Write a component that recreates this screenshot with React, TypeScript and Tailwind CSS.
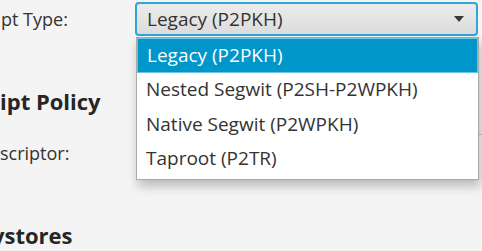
import { useState } from "react";

const scriptTypes = [
  "Legacy (P2PKH)",
  "Nested Segwit (P2SH-P2WPKH)",
  "Native Segwit (P2WPKH)",
  "Taproot (P2TR)",
];

export default function App() {
  const [selected] = useState(0);

  return (
    <main className="relative h-[251px] w-[482px] overflow-hidden bg-[#f4f4f4] font-['Open_Sans',sans-serif] text-[#333333]">
      {/* script type row */}
      <div className="mt-[2px] flex h-[34px] items-center">
        <div className="w-[135px] pl-[1px] text-[18px] leading-none">pt Type:</div>
        <div className="flex h-[34px] w-[343px] items-center rounded-[4px] border-2 border-[#2fa6d8] bg-gradient-to-b from-[#ececec] to-[#dcdcdc] pl-[10px] pr-[12px]">
          <span className="flex-1 text-[19px] leading-none">{scriptTypes[selected]}</span>
          <svg width="10" height="6" viewBox="0 0 10 6">
            <path d="M0 0 L10 0 L5 6 Z" fill="#3a3a3a" />
          </svg>
        </div>
      </div>

      {/* script policy section */}
      <h2 className="mt-[54px] text-[22px] font-bold leading-none text-[#262626]">ipt Policy</h2>

      <div className="mt-[22px] flex h-[50px]">
        <div className="w-[136px] pt-[10px] text-[18px] leading-none">scriptor:</div>
        <div className="h-[50px] flex-1 border-t border-[#c4c4c4] bg-[#f7f7f7]" />
      </div>

      {/* keystores section */}
      <h2 className="ml-[-8px] mt-[40px] text-[22px] font-bold leading-none text-[#262626]">ystores</h2>

      {/* dropdown popup */}
      <ul className="absolute left-[136px] top-[37px] w-[343px] border border-[#a9a9a9] bg-white pb-[3px] shadow-[2px_6px_10px_rgba(0,0,0,0.25)]">
        {scriptTypes.map((t, i) => (
          <li
            key={t}
            className={`flex h-[34.5px] items-center pl-[9px] text-[19px] leading-none ${
              i === selected
                ? "border border-[#6cc3e6] bg-[#0096c9] pl-[8px] text-white"
                : "text-[#333333]"
            }`}
          >
            {t}
          </li>
        ))}
      </ul>
    </main>
  );
}
